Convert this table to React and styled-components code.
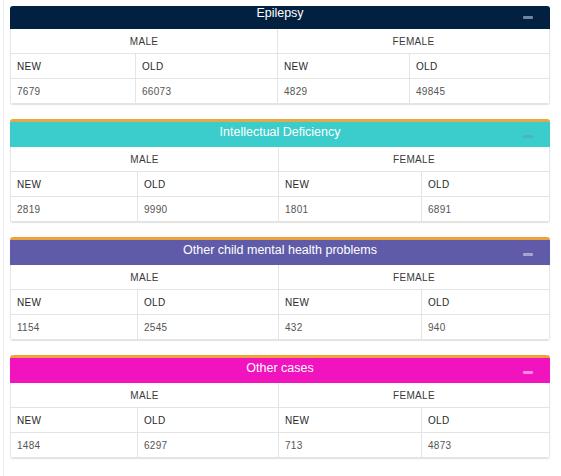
import React from "react";
import styled, { createGlobalStyle } from "styled-components";

const Global = createGlobalStyle`
  html, body { margin: 0; padding: 0; background: #ffffff; }
  body { font-family: "Liberation Sans", Arial, sans-serif; }
`;

const Page = styled.div`
  margin-left: 3px;
  border-left: 1px solid #e8ecf1;
  padding: 6px 0 16px 6px;
  min-height: 476px;
  box-sizing: border-box;
  width: 547px;
`;

const Box = styled.section`
  width: 540px;
  background: #fff;
  border-top: ${(p) => (p.$accent ? `3px solid ${p.$accent}` : "none")};
  border-radius: 3px;
  box-shadow: 0 1px 1px rgba(0, 0, 0, 0.12);
  margin-bottom: 15px;
  overflow: hidden;
`;

const Header = styled.header`
  display: grid;
  grid-template-columns: 1fr auto 1fr;
  align-items: start;
  height: ${(p) => p.$h}px;
  padding-top: ${(p) => p.$pt}px;
  box-sizing: border-box;
  background: ${(p) => p.$bg};
`;

const Title = styled.h3`
  grid-column: 2;
  margin: 0;
  font-size: 12.5px;
  line-height: 15px;
  font-weight: normal;
  color: #ffffff;
  white-space: nowrap;
`;

const Tool = styled.span`
  grid-column: 3;
  justify-self: end;
  width: 10px;
  height: 3px;
  border-radius: 1px;
  margin-top: 10px;
  margin-right: 17px;
  background: ${(p) => p.$color};
`;

const Grid = styled.div`
  display: grid;
  grid-template-columns: ${(p) => p.$cols};
  grid-auto-rows: 25px;
  border-left: 1px solid #e6e6e6;
  border-right: 1px solid #e6e6e6;
`;

const Cell = styled.div`
  grid-column: span ${(p) => p.$span || 1};
  display: flex;
  align-items: center;
  justify-content: ${(p) => (p.$center ? "center" : "flex-start")};
  padding: 0 6px;
  box-sizing: border-box;
  border-bottom: 1px solid #e4e4e4;
  border-right: ${(p) => (p.$last ? "none" : "1px solid #e4e4e4")};
  font-size: 10px;
  color: ${(p) => (p.$kind === "val" ? "#555" : p.$kind === "sub" ? "#2a2a2a" : "#3a3a3a")};
  font-weight: normal;
  letter-spacing: 0.3px;
`;

const cards = [
  {
    title: "Epilepsy",
    bg: "#02203f",
    accent: null,
    h: 23,
    pt: 0,
    tool: "rgba(190,200,215,0.6)",
    cols: "125px 142px 132px 1fr",
    vals: ["7679", "66073", "4829", "49845"],
  },
  {
    title: "Intellectual Deficiency",
    bg: "#3bcccc",
    accent: "#e2a944",
    h: 25,
    pt: 3,
    tool: "rgba(120,135,165,0.35)",
    cols: "127px 141px 143px 1fr",
    vals: ["2819", "9990", "1801", "6891"],
  },
  {
    title: "Other child mental health problems",
    bg: "#5f5ba8",
    accent: "#eea23c",
    h: 25,
    pt: 3,
    tool: "rgba(255,255,255,0.45)",
    cols: "127px 141px 143px 1fr",
    vals: ["1154", "2545", "432", "940"],
  },
  {
    title: "Other cases",
    bg: "#f013be",
    accent: "#f3a23a",
    h: 25,
    pt: 3,
    tool: "rgba(255,255,255,0.5)",
    cols: "127px 141px 143px 1fr",
    vals: ["1484", "6297", "713", "4873"],
  },
];

function Card({ c }) {
  return (
    <Box $accent={c.accent}>
      <Header $bg={c.bg} $h={c.h} $pt={c.pt}>
        <Title>{c.title}</Title>
        <Tool $color={c.tool} />
      </Header>
      <Grid $cols={c.cols}>
        <Cell $span={2} $center>MALE</Cell>
        <Cell $span={2} $center $last>FEMALE</Cell>
        <Cell $kind="sub">NEW</Cell>
        <Cell $kind="sub">OLD</Cell>
        <Cell $kind="sub">NEW</Cell>
        <Cell $kind="sub" $last>OLD</Cell>
        {c.vals.map((v, i) => (
          <Cell key={i} $kind="val" $last={i === 3}>
            {v}
          </Cell>
        ))}
      </Grid>
    </Box>
  );
}

export default function App() {
  return (
    <>
      <Global />
      <Page>
        {cards.map((c) => (
          <Card key={c.title} c={c} />
        ))}
      </Page>
    </>
  );
}
